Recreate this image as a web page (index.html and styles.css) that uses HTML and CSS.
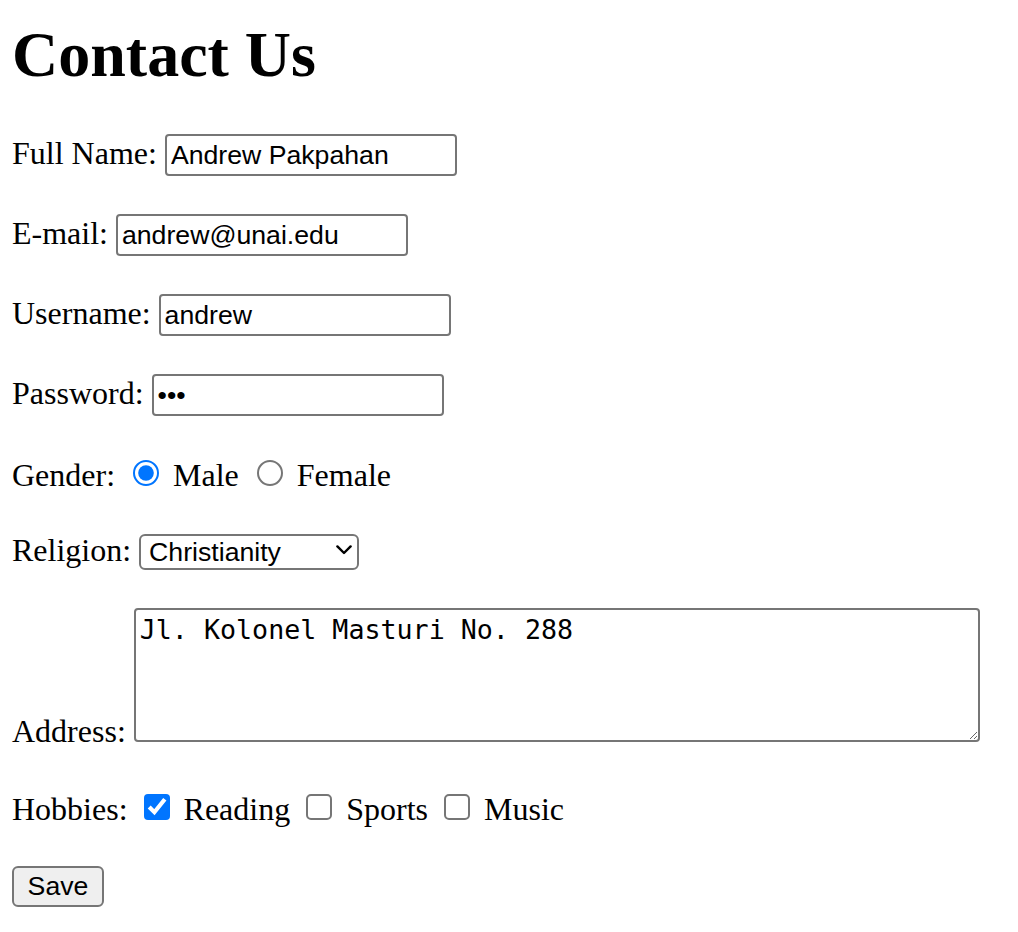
FILE: index.html
```html
<!DOCTYPE html>
<html lang="en">
<head>
<meta charset="utf-8">
<title>Contact Us</title>
<link rel="stylesheet" href="styles.css">
</head>
<body>
<div class="page">
  <h1 class="title">Contact Us</h1>
  <form class="form">
    <p class="row">Full Name: <input class="field" type="text" value="Andrew Pakpahan"></p>
    <p class="row">E-mail: <input class="field" type="email" value="andrew@unai.edu"></p>
    <p class="row">Username: <input class="field" type="text" value="andrew"></p>
    <p class="row">Password: <input class="field" type="password" value="abc"></p>
    <p class="row">Gender: <input class="radio" type="radio" name="gender" checked> Male <input class="radio" type="radio" name="gender"> Female</p>
    <p class="row">Religion: <span class="select-wrap"><select class="select"><option>Christianity</option><option>Islam</option><option>Hinduism</option><option>Buddhism</option></select><svg class="chevron" width="8" height="5" viewBox="0 0 8 5"><path d="M0.7 0.7 L4 4 L7.3 0.7" fill="none" stroke="#000" stroke-width="1.2" stroke-linecap="round" stroke-linejoin="round"/></svg></span></p>
    <p class="row">Address: <textarea class="area">Jl. Kolonel Masturi No. 288</textarea></p>
    <p class="row">Hobbies: <input class="check" type="checkbox" checked> Reading <input class="check" type="checkbox"> Sports <input class="check" type="checkbox"> Music</p>
    <p class="row actions"><button class="btn" type="button">Save</button></p>
  </form>
</div>
</body>
</html>
```
FILE: styles.css
```css
html, body {
  margin: 0;
  padding: 0;
  background: #fff;
}
.page {
  zoom: 2;
  padding: 0 6px;
  font-family: "Liberation Serif", "Times New Roman", serif;
  font-size: 16px;
  color: #000;
}
.title {
  font-size: 32px;
  font-weight: bold;
  margin: 9px 0 21px;
}
.form {
  margin: 0;
}
.row {
  margin: 19px 0;
}
.actions {
  margin-top: 18.5px;
}
.field {
  box-sizing: border-box;
  width: 146px;
  height: 21px;
  font-family: "Liberation Sans", Arial, sans-serif;
  font-size: 13.33px;
  padding: 1px 2px;
  border: 1px solid #767676;
  border-radius: 2px;
  color: #000;
  background: #fff;
}
.radio {
  width: 13px;
  height: 13px;
  margin: 3px 3px 0 5px;
  accent-color: #0075ff;
}
.check {
  width: 13px;
  height: 13px;
  margin: 3px 3px 3px 4px;
  accent-color: #0075ff;
}
.select-wrap {
  position: relative;
  display: inline-block;
}
.select {
  appearance: none;
  -webkit-appearance: none;
  box-sizing: border-box;
  width: 110px;
  height: 18px;
  font-family: "Liberation Sans", Arial, sans-serif;
  font-size: 13.33px;
  padding: 0 0 0 4px;
  border: 1px solid #767676;
  border-radius: 3px;
  background: #fff;
  color: #000;
}
.chevron {
  position: absolute;
  right: 3.5px;
  top: 6.5px;
  pointer-events: none;
}
.area {
  box-sizing: border-box;
  width: 423px;
  height: 67px;
  font-family: "DejaVu Sans Mono", "Liberation Mono", monospace;
  font-size: 13.33px;
  padding: 2px;
  border: 1px solid #767676;
  border-radius: 2px;
  margin: 0;
  vertical-align: baseline;
}
.btn {
  box-sizing: border-box;
  width: 46px;
  height: 20.5px;
  font-family: "Liberation Sans", Arial, sans-serif;
  font-size: 13.33px;
  padding: 1px 6px;
  border: 1px solid #767676;
  border-radius: 3px;
  background: #efefef;
  color: #000;
}
```
